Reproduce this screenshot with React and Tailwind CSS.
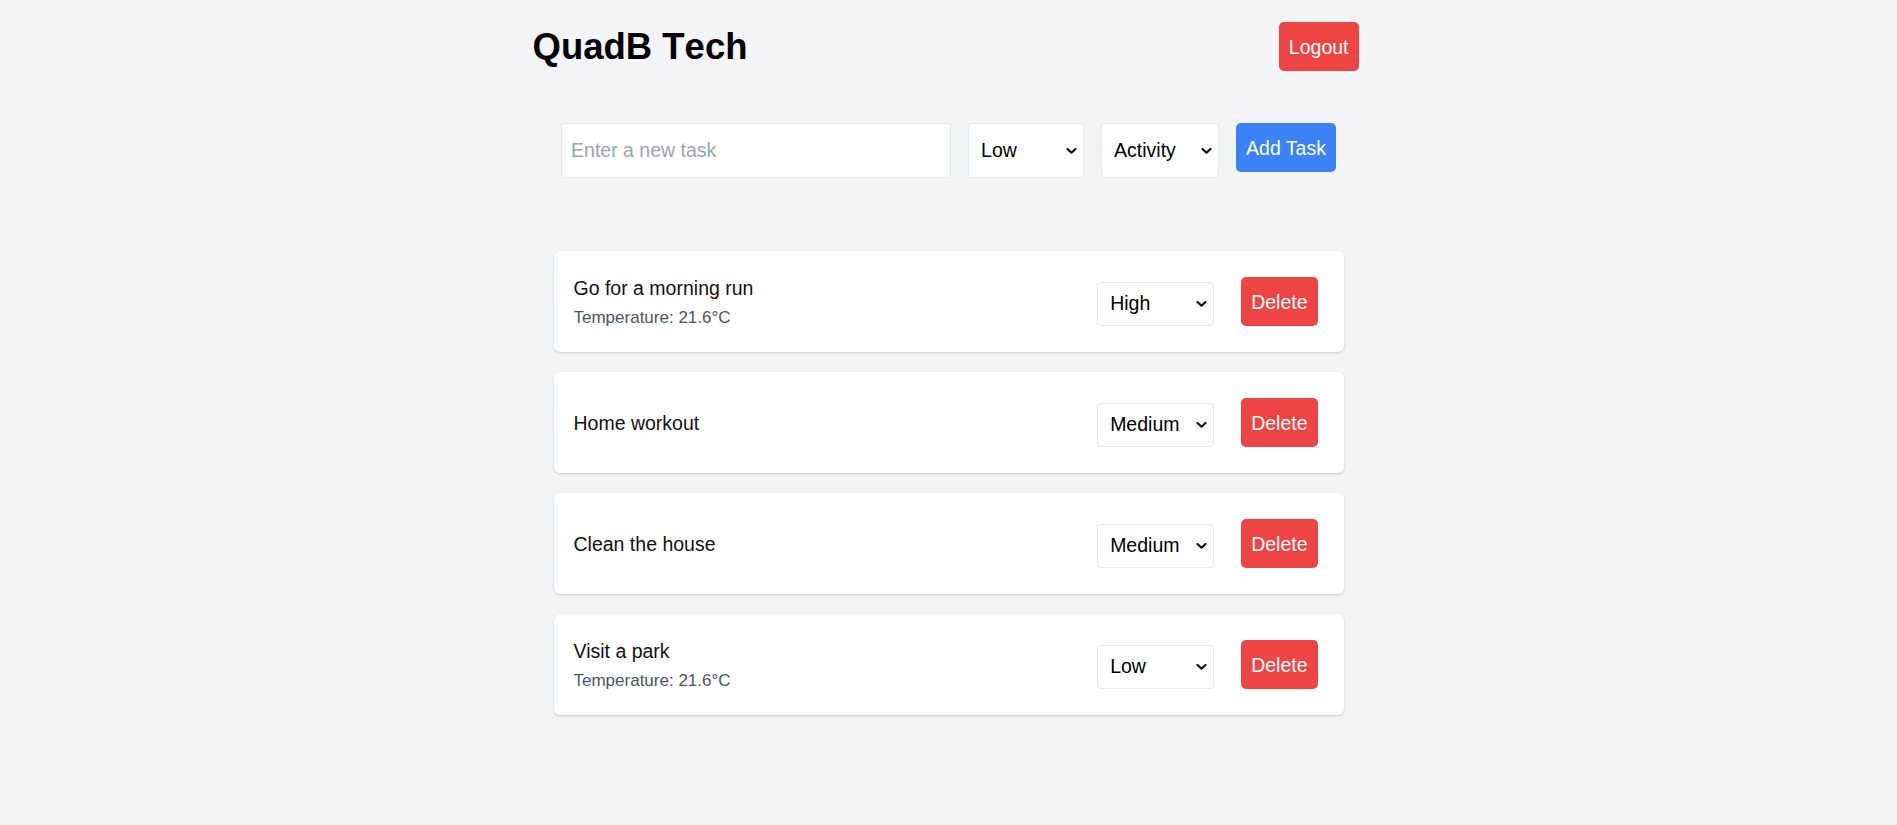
import React from "react";

const tasks = [
  { title: "Go for a morning run", temp: "Temperature: 21.6°C", priority: "High" },
  { title: "Home workout", temp: null, priority: "Medium" },
  { title: "Clean the house", temp: null, priority: "Medium" },
  { title: "Visit a park", temp: "Temperature: 21.6°C", priority: "Low" },
];

function Chevron() {
  return (
    <svg
      className="pointer-events-none absolute right-[7px] top-1/2 -translate-y-1/2"
      width="11"
      height="7"
      viewBox="0 0 11 7"
      fill="none"
    >
      <path d="M1.5 1.5 L5.5 5.2 L9.5 1.5" stroke="#111" strokeWidth="2.2" strokeLinecap="round" strokeLinejoin="round" />
    </svg>
  );
}

function Select({ value, options, className }) {
  return (
    <div className={"relative " + className}>
      <select
        defaultValue={value}
        className="h-full w-full appearance-none rounded-[4px] border border-gray-200 bg-white pl-[12px] text-[19.5px] text-black outline-none"
      >
        {options.map((o) => (
          <option key={o}>{o}</option>
        ))}
      </select>
      <Chevron />
    </div>
  );
}

export default function App() {
  return (
    <div className="min-h-screen bg-[#f3f4f6] pb-20 font-['Liberation_Sans',Arial,sans-serif] text-black">
      <header className="mx-auto flex w-[832px] items-center justify-between pr-[6px] pt-[22px]">
        <h1 className="text-[36.5px] font-bold leading-10 text-black [font-kerning:none]">QuadB Tech</h1>
        <button className="rounded-[5px] bg-[#ef4444] px-2.5 py-[10.5px] text-[19.5px] leading-7 text-white">
          Logout
        </button>
      </header>

      <div className="mt-[52px] flex items-start justify-center gap-[17px]">
        <input
          placeholder="Enter a new task"
          className="h-[55px] w-[390px] rounded-[4px] border border-gray-200 bg-white pl-[9px] text-[19.5px] text-black outline-none placeholder:text-[#9ca3af]"
        />
        <Select value="Low" options={["Low", "Medium", "High"]} className="h-[55px] w-[116px]" />
        <Select value="Activity" options={["Activity", "Work", "Personal"]} className="h-[55px] w-[118px]" />
        <button className="rounded-[5px] bg-[#3b82f6] px-2.5 py-[10.5px] text-[19.5px] leading-7 text-white">
          Add Task
        </button>
      </div>

      <div className="mx-auto mt-[73px] flex w-[790px] flex-col gap-5">
        {tasks.map((t) => (
          <div
            key={t.title}
            className="flex h-[101px] items-center justify-between rounded-md bg-white pl-5 pr-[26px] shadow-[0_1px_3px_rgba(0,0,0,0.12),0_1px_2px_rgba(0,0,0,0.06)]"
          >
            <div className="flex flex-col">
              <div className="text-[19.5px] leading-7 text-[#111]">{t.title}</div>
              {t.temp && <div className="mt-1 text-[17px] leading-6 text-[#4b5563]">{t.temp}</div>}
            </div>
            <div className="flex items-end gap-[27px]">
              <Select value={t.priority} options={["Low", "Medium", "High"]} className="h-[44px] w-[117px]" />
              <button className="rounded-[5px] bg-[#ef4444] px-2.5 py-[10.5px] text-[19.5px] leading-7 text-white">
                Delete
              </button>
            </div>
          </div>
        ))}
      </div>
    </div>
  );
}
